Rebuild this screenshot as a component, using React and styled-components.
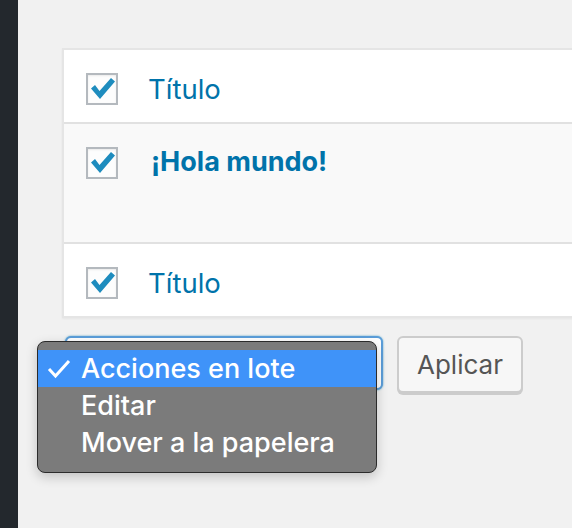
import React from "react";
import styled, { createGlobalStyle } from "styled-components";

const Global = createGlobalStyle`
  html, body { margin: 0; padding: 0; background: #f1f1f1; overflow: hidden; }
  body { font-family: Inter, "Noto Sans", "Liberation Sans", sans-serif; }
  * { box-sizing: border-box; }
`;

const Page = styled.div`
  display: flex;
  width: 572px;
  height: 528px;
`;

const Sidebar = styled.div`
  width: 18px;
  flex: none;
  background: #23282d;
`;

const Main = styled.div`
  flex: 1;
  padding: 48px 0 0 44px;
  overflow: hidden;
`;

const Table = styled.div`
  width: 600px;
  background: #fff;
  border: 2px solid #e5e5e5;
  border-right: none;
  box-shadow: 0 1px 2px rgba(0, 0, 0, 0.05);
`;

const Row = styled.div`
  display: flex;
  align-items: flex-start;
  height: ${(p) => p.$h}px;
  background: ${(p) => (p.$alt ? "#f9f9f9" : "#fff")};
  border-top: ${(p) => (p.$first ? "none" : "2px solid #e1e1e1")};
  padding: 23px 0 0 22px;
`;

const Box = styled.div`
  width: 32px;
  height: 32px;
  flex: none;
  border: 2px solid #b4b9be;
  background: #fdfdfd;
  box-shadow: inset 0 1px 2px rgba(0, 0, 0, 0.08);
  display: flex;
`;

const Title = styled.a`
  margin-left: ${(p) => (p.$bold ? 33 : 30)}px;
  color: #0073aa;
  font-size: ${(p) => (p.$bold ? 27 : 27.5)}px;
  font-weight: ${(p) => (p.$bold ? 700 : 400)};
  line-height: 32px;
  text-decoration: none;
  margin-top: ${(p) => (p.$bold ? -1 : 0)}px;
`;

const Nav = styled.div`
  display: flex;
  align-items: flex-start;
  gap: 14px;
  margin-top: 18px;
  margin-left: 3px;
`;

const SelectWrap = styled.div`
  position: relative;
  width: 318px;
  height: 54px;
  border: 2px solid #5b9dd9;
  border-radius: 6px;
  background: #fff;
  box-shadow: 0 0 2px rgba(30, 140, 190, 0.8);
`;

const Menu = styled.div`
  position: absolute;
  left: -30px;
  top: 3px;
  width: 340px;
  padding: 8px 0 11px;
  background: #7b7b7b;
  border: 1px solid #2b2b2b;
  border-radius: 8px;
  box-shadow: 0 4px 12px rgba(0, 0, 0, 0.2);
`;

const Item = styled.div`
  position: relative;
  height: 37px;
  padding-left: 43px;
  display: flex;
  align-items: center;
  color: #fff;
  font-size: 27px;
  font-weight: 500;
  background: ${(p) => (p.$active ? "#3f93f9" : "transparent")};
`;

const Tick = styled.svg`
  position: absolute;
  left: 9px;
  top: 9px;
`;

const Button = styled.button`
  width: 126px;
  height: 57px;
  border: 2px solid #cccccc;
  border-radius: 6px;
  background: #f7f7f7;
  box-shadow: 0 2px 0 #cccccc;
  color: #555;
  font-family: inherit;
  font-size: 26px;
  padding: 0;
`;

const Check = () => (
  <svg width="28" height="28" viewBox="0 0 28 28">
    <path d="M3 13.5 L7 10 L11.5 16 L23 3 L27 6.5 L12 24 Z" fill="#1e8cbe" />
  </svg>
);

export default function App() {
  return (
    <Page>
      <Global />
      <Sidebar />
      <Main>
        <Table>
          <Row $h={72} $first>
            <Box><Check /></Box>
            <Title>Título</Title>
          </Row>
          <Row $h={120} $alt>
            <Box><Check /></Box>
            <Title $bold>¡Hola mundo!</Title>
          </Row>
          <Row $h={74}>
            <Box><Check /></Box>
            <Title>Título</Title>
          </Row>
        </Table>
        <Nav>
          <SelectWrap>
            <Menu>
              <Item $active>
                <Tick width="24" height="20" viewBox="0 0 24 20">
                  <polyline points="2,10 8.5,17 22,2" fill="none" stroke="#fff" strokeWidth="3" />
                </Tick>
                Acciones en lote
              </Item>
              <Item>Editar</Item>
              <Item>Mover a la papelera</Item>
            </Menu>
          </SelectWrap>
          <Button>Aplicar</Button>
        </Nav>
      </Main>
    </Page>
  );
}
